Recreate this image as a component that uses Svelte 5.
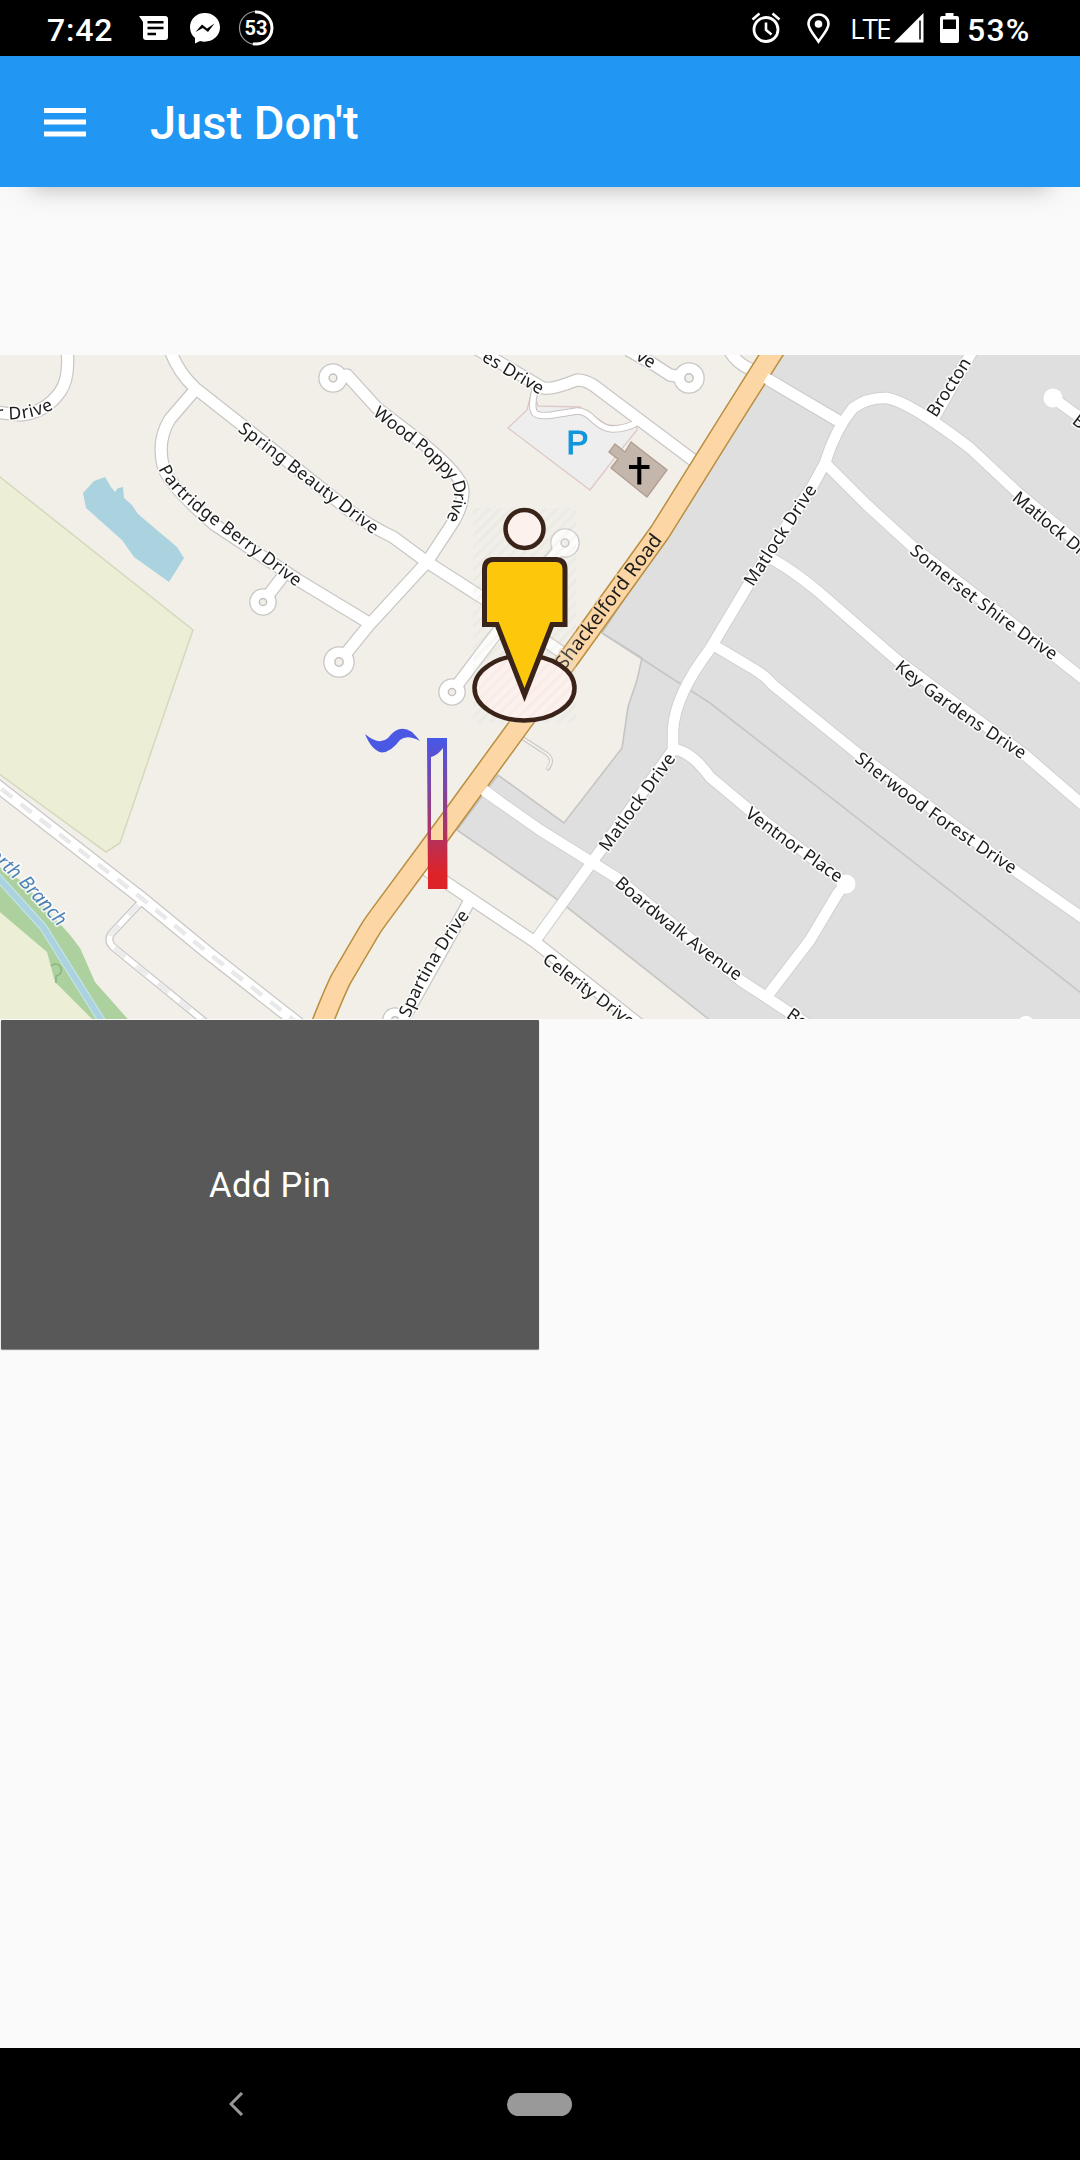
<script>
  const majorRoad = 'M778 344 L730 420 L660 532 L570 657 L521 723 L443 830 L378 918 Q372 926 368 933 L341 979 Q334 993 321 1026';

  const roads = [
    'M67 350 Q70 378 60 392 Q45 413 20 415 L-5 412',
    'M170 350 Q178 372 195 388 L242 425 L350 511 Q366 524 393 537 L427 562 L483 598 L570 658',
    'M195 390 L170 419 Q157 440 163 465 Q166 483 215 525 L298 580 L369 623',
    'M283 576 L263 602',
    'M333 378 L347 375 L377 408 L415 437 Q463 475 463 490 Q463 508 450 527 L427 562 L369 625 L339 662',
    'M470 345 L543 388 Q552 390 577 380 Q585 380 593 385 L697 463',
    'M628 350 L653 364 L670 375 L689 378',
    'M565 543 L540 572 L520 600',
    'M452 692 L495 635 L520 605',
    'M729 350 Q736 363 752 370 L842 423',
    'M423 868 L447 883 L535 942 L640 1025',
    'M470 900 L463 913 L407 1013 L395 1020'
  ];

  const eastRoads = [
    'M767 379 L842 423',
    'M825 463 Q835 430 853 408 Q868 397 887 398 Q910 402 970 448 L1017 492 L1090 553',
    'M933 420 L973 350',
    'M1053 398 L1085 421',
    'M825 463 L867 505 L913 547 L1057 658 L1090 684',
    'M768 557 Q790 568 820 593 L897 660 L1025 755 L1090 811',
    'M710 643 L747 665 Q765 675 773 685 L857 753 L1017 872 L1090 923',
    'M674 749 Q692 752 710 777 L747 808 L846 884 L838 893 L810 940 L768 995',
    'M483 790 L540 830 L617 878 L740 980 L810 1026'
  ];
  const matlock = 'M825 463 L813 485 L750 582 L710 649 Q675 695 673 730 L673 750 L603 847 L535 941';

  const loops = [
    [333, 378, 14], [263, 602, 13], [339, 662, 15], [689, 378, 15], [565, 543, 14], [452, 692, 13], [395, 1020, 12]
  ];
  const dots = [[1053, 398, 9.5], [846, 884, 9.5], [1026, 1024, 8]];

  const service = 'M535 390 Q531 406 534 412 Q537 417 552 415 L577 411 Q586 411 594 420 Q604 429 612 429 Q626 429 638 422';
  const lane = 'M141 902 L111 934 Q107 941 113 947 L210 1026';
  const trackRoad = 'M-5 784 L140 897 L207 952 L300 1025';

  const labels = [
    { t: 'r Drive', d: 'M-4 412 Q26 417 54 402', n: 57 },
    { t: 'Spring Beauty Drive', d: 'M241 426 L378 531', n: 171 },
    { t: 'Partridge Berry Drive', d: 'M164 466 Q172 486 205 511 L310 590', n: 180 },
    { t: 'Wood Poppy Drive', d: 'M376 410 L414 439 Q458 472 460 490 Q461 508 447 530', n: 151 },
    { t: 'es Drive', d: 'M484 355 L552 395', n: 68 },
    { t: 've', d: 'M638 354 L662 368', n: 0 },
    { t: 'Shackelford Road', d: 'M560 667 L665 527', n: 163, road: true },
    { t: 'Matlock Drive', d: 'M748 584 L816 480', n: 117 },
    { t: 'Matlock Drive', d: 'M603 849 L677 747', n: 116 },
    { t: 'Brocton', d: 'M931 415 L975 346', n: 66 },
    { t: 'Matlock Drive', d: 'M1015 495 L1125 586', n: 0 },
    { t: 'Somerset Shire Drive', d: 'M913 548 Q981 606 1064 661', n: 179 },
    { t: 'Key Gardens Drive', d: 'M898 664 Q957 713 1034 760', n: 156 },
    { t: 'Sherwood Forest Drive', d: 'M858 756 Q927 812 1024 875', n: 194 },
    { t: 'Ventnor Place', d: 'M748 811 Q792 845 850 884', n: 115 },
    { t: 'Boardwalk Avenue', d: 'M618 880 Q676 932 750 983', n: 156 },
    { t: 'Celerity Drive', d: 'M545 957 L655 1040', n: 0 },
    { t: 'Spartina Drive', d: 'M404 1016 Q427 960 468 908', n: 121 },
    { t: 'Boardwalk', d: 'M789 1012 L880 1076', n: 0 },
    { t: 'Brocton', d: 'M1075 418 L1130 460', n: 0 }
  ];
</script>

<div class="screen">
  <header class="status">
    <span class="clock">7:42</span>
    <svg class="message" width="29" height="25" viewBox="0 0 29 25">
      <path fill="#fff" d="M0 0H26Q29 0 29 3V21Q29 24 26 24H7Q4 24 4 21V6Z" />
      <path stroke="#000" stroke-width="2.4" d="M8.5 6.2H24.5M8.5 12H24.5M8.5 18H17" />
    </svg>
    <svg class="messenger" width="30" height="31" viewBox="0 0 30 31">
      <path fill="#fff" d="M15 0C6 0 0 6.4 0 14.3C0 19 2 22.5 5 25V30.5L10 28C19 30.7 30 25 30 14.3C30 6.400 23.500 0 15 0Z" />
      <path fill="#000" d="M5.500 19L12 11.500L17 15.500L24.500 10.500L18 19L12.800 15Z" />
    </svg>
    <span class="ring">
      <svg width="36" height="36" viewBox="0 0 36 36" fill="none">
        <circle cx="18" cy="18" r="16.500" stroke="#999" stroke-width="1.200" />
        <path stroke="#fff" stroke-width="3" d="M17 2A16 16 0 1 1 15 33.700" />
      </svg>
      <b>53</b>
    </span>
    <span class="spacer"></span>
    <svg class="alarm" width="30" height="32" viewBox="0 0 30 32" fill="none" stroke="#fff">
      <circle cx="15" cy="17.500" r="12" stroke-width="2.800" />
      <path stroke-width="2.600" d="M1.500 7.500L8.500 1.500M28.500 7.500L21.500 1.500M15 10.500V18L20.500 22.500" />
    </svg>
    <svg class="place" width="23" height="31" viewBox="0 0 23 31">
      <path fill="none" stroke="#fff" stroke-width="2.600" d="M11.500 28.500C8 23 1.500 16.500 1.500 11A10 9.500 0 0 1 21.500 11C21.500 16.500 15 23 11.500 28.500Z" />
      <circle cx="11.500" cy="11" r="3.800" fill="#fff" />
    </svg>
    <span class="lte">LTE</span>
    <svg class="signal" width="30" height="30" viewBox="0 0 30 30">
      <path fill="#fff" d="M0 29.500L29.500 0V29.500Z" />
      <path stroke="#000" stroke-width="1.500" d="M26 7.500V26.500" />
    </svg>
    <svg class="battery" width="19" height="31" viewBox="0 0 19 31">
      <path fill="#fff" d="M5.500 0H13.500V3H17Q19 3 19 5V28Q19 30 17 30H2Q0 30 0 28V5Q0 3 2 3H5.500Z" />
      <path fill="#000" d="M3 6.500H16V16H3Z" />
    </svg>
    <span class="percent">53%</span>
  </header>

  <nav class="appbar">
    <svg width="42" height="29" viewBox="0 0 42 29">
      <path fill="#fff" d="M0 0H42V5H0ZM0 11.500H42V16.500H0ZM0 23.500H42V28.500H0Z" />
    </svg>
    <h1>Just Don't</h1>
  </nav>

  <main>
    <svg class="map" width="1080" height="664" viewBox="0 355 1080 664">
      <defs>
        <linearGradient id="heat" x1="0" y1="0" x2="0" y2="1">
          <stop offset="0" stop-color="#4658ea" />
          <stop offset="0.9" stop-color="#de2328" />
        </linearGradient>
        <pattern id="hatch" width="8" height="8" patternUnits="userSpaceOnUse" patternTransform="rotate(45)">
          <path d="M0 0V8" stroke="#8a7660" stroke-opacity="0.045" stroke-width="6" />
        </pattern>
      </defs>

      <g class="tiles">
        <rect x="-10" y="345" width="1100" height="684" fill="#f2efe9" />
        <path class="field" d="M-5 473L193 630L174 685L120 843L106 852L-5 771Z" />
        <path fill="#ecefd5" d="M-5 904L47 950L55 982L98 1025H-5Z" />
        <path fill="#add19e" d="M-5 864L23 882L70 935L80 948L95 982L133 1025H98L55 982L47 952L-5 908Z" />
        <path fill="none" stroke="#c8e5ee" stroke-width="8" d="M-5 874L43 927L105 1026" />
        <path fill="none" stroke="#aad3df" stroke-width="6" d="M-5 874L43 927L105 1026" />
        <path fill="none" stroke="#8ab680" stroke-width="1.600" d="M51 966A6 6 0 1 1 56 976V983" />
        <path fill="#aad3df" d="M83 493L94 481L105 477L111 487L115 492L118 488L123 487L124 498L132 505L138 514L177 547L184 558L169 582L134 557L122 540L86 508Z" />

        <path class="district" d="M785 350L602 633L642 658L637 680L628 707L622 748L564 823L498 775L457 830L558 900L716 1025H1090V345Z" />
        <path fill="none" stroke="#c6c6c6" stroke-width="1.600" d="M602 633L710 703L1090 1000" />

        <path fill="#eee" stroke="#dfc9c9" stroke-width="1.300" d="M508 428L527 410L532 390L538 406L580 407L607 425L620 426L637 424L637 430L624 446L590 490Z" />
        <path fill="#c4b6ab" stroke="#b09f93" stroke-width="1.400" d="M615 444L625 452L631 442L667 470L647 497L611 468L618 459L609 452Z" />

        {#each roads as d}<path class="road casing" {d} />{/each}
        {#each loops as [x, y, r]}<circle cx={x} cy={y} r={r + 0.8} fill="#c9c7c6" />{/each}
        {#each eastRoads as d}<path class="road casing east" {d} />{/each}
        <path class="road casing east" d={matlock} />
        <path class="road" stroke="#c9c1c0" stroke-width="7.500" d={service} />
        <path class="road" stroke="#c9c7c6" stroke-width="8" d={lane} />
        <path class="road" stroke="#c9c7c6" stroke-width="14" d={trackRoad} />
        {#each roads as d}<path class="road fill" {d} />{/each}
        {#each eastRoads as d}<path class="road fill east" {d} />{/each}
        <path class="road fill east" d={matlock} />
        {#each loops as [x, y, r]}
          <circle cx={x} cy={y} r={r - 0.5} fill="#fff" />
          <circle cx={x} cy={y} r={r / 3.6} fill="#f2efe9" stroke="#c4c2c0" stroke-width="1.500" />
        {/each}
        {#each dots as [x, y, r]}<circle cx={x} cy={y} {r} fill="#fff" />{/each}
        <path class="road" stroke="#fff" stroke-width="5.500" d={service} />
        <path class="road" stroke="#fff" stroke-width="5.500" d={lane} />
        <path class="road" stroke="#ececec" stroke-width="5" stroke-dasharray="14 14" stroke-dashoffset="-32" d={lane} />
        <path class="road" stroke="#fff" stroke-width="11.500" d={trackRoad} />
        <path class="dashes" d={trackRoad} />
        <path fill="none" stroke="#c9c7c6" stroke-width="4" d="M521 737L547 754Q555 760 547 770" />
        <path fill="none" stroke="#f4f2ee" stroke-width="2" d="M521 737L547 754Q555 760 547 769" />
        <path class="road" stroke="#b88f40" stroke-width="22" d={majorRoad} />
        <path class="road" stroke="#fcd6a4" stroke-width="19" d={majorRoad} />
        <path class="road fill east" stroke-linecap="butt" d="M484 790L500 802M766 378L778 385" />

        <text class="parking" x="566.500" y="454">P</text>
        <path stroke="#000" stroke-width="4" d="M639.300 457V484.500M629 467H649.500" />

        {#each labels as l, i}
          <path id="way-{i}" d={l.d} fill="none" />
          <text class="label" class:on-major={l.road} dy="6" textLength={l.n || undefined}>
            <textPath href="#way-{i}">{l.t}</textPath>
          </text>
        {/each}
        <path id="stream" d="M-9 853L24 883L80 945" fill="none" />
        <text class="label stream" dy="4"><textPath href="#stream">orth Branch</textPath></text>
      </g>

      <g class="person">
        <rect x="473" y="508" width="103" height="215" fill="#f2efe9" fill-opacity="0.200" />
        <rect x="473" y="508" width="103" height="215" fill="url(#hatch)" />
        <ellipse cx="524.500" cy="688" rx="50" ry="32.500" fill="#fdf1ee" stroke="#3a2319" stroke-width="4.500" />
        <ellipse cx="524.500" cy="688" rx="48" ry="30" fill="url(#hatch)" />
        <circle cx="524.500" cy="529" r="19" fill="#fdf1ee" stroke="#3a2319" stroke-width="4.500" />
        <path fill="#fdc80b" stroke="#3a2319" stroke-width="5" d="M493 559.500H556Q565 560 565 569V624.500H552L524.500 695L497 624.500H484.500V569Q484.500 560 493 559.500Z" />
      </g>

      <path fill="#4a58e4" d="M365 734Q379 746 388 738Q399 723 412 732Q417 737 420 741Q407 734 400 740Q391 752 382 752.500Q372 751 365 734Z" />
      <path fill="url(#heat)" fill-rule="evenodd" d="M427 738H447L447.500 889H428ZM431 757V840H443V748Q438 755 431 757Z" />
    </svg>

    <button type="button">Add Pin</button>
  </main>

  <footer>
    <svg class="back" width="15" height="24" viewBox="0 0 15 24">
      <path fill="none" stroke="#999" stroke-width="3" d="M13 1L2 12L13 23" />
    </svg>
    <span class="home"></span>
  </footer>
</div>

<style>
  :global(body) { margin: 0; background: #fafafa; }
  .screen {
    width: 1080px;
    height: 2160px;
    display: flex;
    flex-direction: column;
    background: #fafafa;
    font-family: Roboto, sans-serif;
    overflow: hidden;
  }
  .status {
    height: 56px;
    box-sizing: border-box;
    padding: 0 47px 0 47px;
    display: flex;
    align-items: center;
    background: #000;
    color: #fff;
    flex: none;
  }
  .clock, .percent { font-size: 32px; font-weight: 500; line-height: 56px; padding-top: 2px; height: 56px; box-sizing: border-box; }
  .clock { width: 92px; letter-spacing: 0.800px; }
  .messenger { margin-left: 22px; }
  .ring { margin-left: 18px; width: 36px; height: 36px; display: grid; place-items: center; }
  .ring > * { grid-area: 1 / 1; }
  .ring b { font-size: 20px; line-height: 36px; }
  .spacer { flex: 1; }
  .place { margin-left: 26px; }
  .lte { margin-left: 20px; width: 44px; font: 28px/54px "Open Sans", sans-serif; letter-spacing: -2px; }
  .battery { margin-left: 16px; }
  .percent { margin-left: 8px; width: 66px; letter-spacing: 1.200px; }
  .appbar {
    height: 131px;
    flex: none;
    display: flex;
    align-items: center;
    padding-left: 44px;
    gap: 64px;
    background: #2196f3;
    color: #fff;
    box-shadow: 0 34px 20px -34px rgba(0, 0, 0, 0.240), 0 20px 34px -14px rgba(0, 0, 0, 0.060);
  }
  .appbar svg { margin-top: 2px; }
  h1 { margin: 2px 0 0; font-size: 47px; font-weight: 500; line-height: 131px; }
  main { flex: 1; padding-top: 168px; display: flex; flex-direction: column; align-items: flex-start; }
  .map { display: block; overflow: hidden; }
  .tiles { filter: blur(0.5px); }
  .field { fill: #ecefd5; stroke: #d6d8bd; stroke-width: 1.500; }
  .district { fill: #dfdfdf; stroke: #c6c5c4; stroke-width: 1.600; }
  .road { fill: none; stroke-linejoin: round; }
  .casing { stroke: #c9c7c6; stroke-width: 13.500; }
  .casing.east { stroke: #d0d0d0; stroke-width: 12.500; }
  .fill { stroke: #fff; stroke-width: 11; }
  .fill.east { stroke-width: 10.500; }
  .dashes { fill: none; stroke: #e9e9e9; stroke-width: 4.500; stroke-dasharray: 14 10.500; stroke-dashoffset: -8; }
  .label {
    font-family: "Noto Sans", sans-serif;
    font-size: 17.500px;
    fill: #1c1c1c;
    stroke: #fff;
    stroke-opacity: 0.750;
    stroke-width: 3.500px;
    stroke-linejoin: round;
    paint-order: stroke;
  }
  .label.on-major { font-size: 19.500px; stroke: #fcd6a4; }
  .label.stream { font-style: italic; font-size: 19px; fill: #4f83b8; }
  .parking { font: 400 33px "Liberation Sans", sans-serif; fill: #1296db; stroke: #1296db; stroke-width: 1.200px; }
  button {
    width: 538px;
    height: 329px;
    margin: 1px 0 0 1px;
    padding: 0;
    border: 0;
    border-radius: 1px;
    background: #585858;
    color: #fff;
    font: 34.500px Roboto, sans-serif;
    letter-spacing: 0.400px;
    box-shadow: 0 1px 1px rgba(0, 0, 0, 0.500);
  }
  footer { height: 112px; flex: none; background: #000; display: flex; align-items: center; padding-left: 229px; }
  .home { width: 65px; height: 23px; border-radius: 12px; background: #999; margin-left: 263px; }
</style>
